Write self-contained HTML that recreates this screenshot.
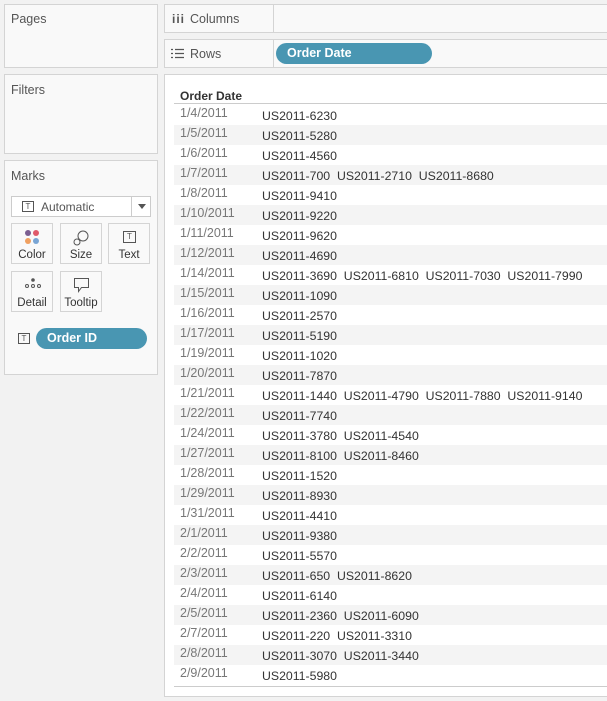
<!DOCTYPE html><html><head><style>
*{margin:0;padding:0;box-sizing:border-box}
body{width:607px;height:701px;background:#f2f2f2;font-family:"Liberation Sans",sans-serif;position:relative;overflow:hidden;font-size:12px;color:#333}
.p{position:absolute;background:#f9f9f9;border:1px solid #d4d4d4}
.t{position:absolute;color:#555;font-size:12.5px}
.btn{position:absolute;width:42px;height:41px;border:1px solid #d4d4d4;background:#f9f9f9;text-align:center;font-size:11.5px;color:#333}
.btn span{position:absolute;left:0;right:0;top:25px}
.pill{position:absolute;background:#4996b2;color:#fff;border-radius:11px;font-weight:bold;font-size:12.5px;padding-left:11px;line-height:21px}
.tb{position:absolute;display:block;width:12px;height:11px;border:1px solid #555;font-size:8px;line-height:9px;text-align:center;color:#555}
.row{position:absolute;left:174px;width:440px;height:20px}
.row:nth-child(even){background:#f4f4f4}
.d{position:absolute;left:6px;top:1px;color:#777;font-size:12.5px}
.i{position:absolute;left:88px;top:4px;color:#333;font-size:12.3px;white-space:pre}
</style></head><body>
<div class="p" style="left:4px;top:4px;width:154px;height:64px"></div><div class="t" style="left:11px;top:12px">Pages</div>
<div class="p" style="left:4px;top:74px;width:154px;height:80px"></div><div class="t" style="left:11px;top:83px">Filters</div>
<div class="p" style="left:4px;top:160px;width:154px;height:215px"></div><div class="t" style="left:11px;top:169px">Marks</div>
<div style="position:absolute;left:11px;top:196px;width:140px;height:21px;border:1px solid #ccc;background:#fff"></div>
<div style="position:absolute;left:131px;top:197px;width:1px;height:19px;background:#ccc"></div>
<div style="position:absolute;left:138px;top:204px;border:4px solid transparent;border-top:5px solid #555"></div>
<div class="tb" style="left:22px;top:201px">T</div>
<div style="position:absolute;left:41px;top:200px;color:#555;font-size:12px">Automatic</div>
<div class="btn" style="left:11px;top:223px"><svg width="20" height="20" style="position:absolute;left:11px;top:4px"><circle cx="5" cy="5" r="3" fill="#7b5e91"/><circle cx="13" cy="5" r="3" fill="#e05a6a"/><circle cx="5" cy="13" r="3" fill="#f0a060"/><circle cx="13" cy="13" r="3" fill="#79a5d4"/></svg><span>Color</span></div>
<div class="btn" style="left:60px;top:223px"><svg width="20" height="20" style="position:absolute;left:11px;top:4px" fill="none" stroke="#555"><circle cx="11" cy="8" r="5"/><circle cx="5" cy="14" r="3"/></svg><span>Size</span></div>
<div class="btn" style="left:108px;top:223px"><div class="tb" style="left:14px;top:7px;width:13px;height:12px;line-height:10px">T</div><span>Text</span></div>
<div class="btn" style="left:11px;top:271px"><svg width="20" height="14" style="position:absolute;left:11px;top:6px" fill="none" stroke="#555"><circle cx="10" cy="2" r="1.3" fill="#555"/><circle cx="4" cy="8" r="1.5"/><circle cx="10" cy="8" r="1.5"/><circle cx="16" cy="8" r="1.5"/></svg><span>Detail</span></div>
<div class="btn" style="left:60px;top:271px"><svg width="20" height="18" style="position:absolute;left:11px;top:4px" fill="none" stroke="#555"><path d="M2.5 2.5h14v9h-7l-3 4v-4h-4z"/></svg><span>Tooltip</span></div>
<div class="tb" style="left:18px;top:333px">T</div>
<div class="pill" style="left:36px;top:328px;width:111px">Order ID</div>
<div class="p" style="left:164px;top:4px;width:450px;height:29px"></div>
<div style="position:absolute;left:273px;top:5px;width:1px;height:27px;background:#d4d4d4"></div>
<div style="position:absolute;left:172px;top:12px;font-weight:bold;color:#555;font-size:12px;letter-spacing:1px">iii</div>
<div class="t" style="left:190px;top:12px">Columns</div>
<div class="p" style="left:164px;top:39px;width:450px;height:29px"></div>
<div style="position:absolute;left:273px;top:40px;width:1px;height:27px;background:#d4d4d4"></div>
<svg width="14" height="12" style="position:absolute;left:171px;top:48px" stroke="#555" stroke-width="1.3"><path d="M0 1.5h2M4 1.5h9M0 5.5h2M4 5.5h9M0 9.5h2M4 9.5h9"/></svg>
<div class="t" style="left:190px;top:47px">Rows</div>
<div class="pill" style="left:276px;top:43px;width:156px">Order Date</div>
<div style="position:absolute;left:164px;top:74px;width:450px;height:623px;background:#fff;border:1px solid #d4d4d4"></div>
<div style="position:absolute;left:180px;top:89px;font-weight:bold;color:#333;font-size:12px">Order Date</div>
<div style="position:absolute;left:174px;top:103px;width:440px;height:1px;background:#ccc"></div>
<div style="position:absolute;left:174px;top:686px;width:440px;height:1px;background:#ccc"></div>
<div style="position:absolute;left:0;top:0">
<div class="row" style="top:105px"><div class="d">1/4/2011</div><div class="i">US2011-6230</div></div>
<div class="row" style="top:125px"><div class="d">1/5/2011</div><div class="i">US2011-5280</div></div>
<div class="row" style="top:145px"><div class="d">1/6/2011</div><div class="i">US2011-4560</div></div>
<div class="row" style="top:165px"><div class="d">1/7/2011</div><div class="i">US2011-700  US2011-2710  US2011-8680</div></div>
<div class="row" style="top:185px"><div class="d">1/8/2011</div><div class="i">US2011-9410</div></div>
<div class="row" style="top:205px"><div class="d">1/10/2011</div><div class="i">US2011-9220</div></div>
<div class="row" style="top:225px"><div class="d">1/11/2011</div><div class="i">US2011-9620</div></div>
<div class="row" style="top:245px"><div class="d">1/12/2011</div><div class="i">US2011-4690</div></div>
<div class="row" style="top:265px"><div class="d">1/14/2011</div><div class="i">US2011-3690  US2011-6810  US2011-7030  US2011-7990</div></div>
<div class="row" style="top:285px"><div class="d">1/15/2011</div><div class="i">US2011-1090</div></div>
<div class="row" style="top:305px"><div class="d">1/16/2011</div><div class="i">US2011-2570</div></div>
<div class="row" style="top:325px"><div class="d">1/17/2011</div><div class="i">US2011-5190</div></div>
<div class="row" style="top:345px"><div class="d">1/19/2011</div><div class="i">US2011-1020</div></div>
<div class="row" style="top:365px"><div class="d">1/20/2011</div><div class="i">US2011-7870</div></div>
<div class="row" style="top:385px"><div class="d">1/21/2011</div><div class="i">US2011-1440  US2011-4790  US2011-7880  US2011-9140</div></div>
<div class="row" style="top:405px"><div class="d">1/22/2011</div><div class="i">US2011-7740</div></div>
<div class="row" style="top:425px"><div class="d">1/24/2011</div><div class="i">US2011-3780  US2011-4540</div></div>
<div class="row" style="top:445px"><div class="d">1/27/2011</div><div class="i">US2011-8100  US2011-8460</div></div>
<div class="row" style="top:465px"><div class="d">1/28/2011</div><div class="i">US2011-1520</div></div>
<div class="row" style="top:485px"><div class="d">1/29/2011</div><div class="i">US2011-8930</div></div>
<div class="row" style="top:505px"><div class="d">1/31/2011</div><div class="i">US2011-4410</div></div>
<div class="row" style="top:525px"><div class="d">2/1/2011</div><div class="i">US2011-9380</div></div>
<div class="row" style="top:545px"><div class="d">2/2/2011</div><div class="i">US2011-5570</div></div>
<div class="row" style="top:565px"><div class="d">2/3/2011</div><div class="i">US2011-650  US2011-8620</div></div>
<div class="row" style="top:585px"><div class="d">2/4/2011</div><div class="i">US2011-6140</div></div>
<div class="row" style="top:605px"><div class="d">2/5/2011</div><div class="i">US2011-2360  US2011-6090</div></div>
<div class="row" style="top:625px"><div class="d">2/7/2011</div><div class="i">US2011-220  US2011-3310</div></div>
<div class="row" style="top:645px"><div class="d">2/8/2011</div><div class="i">US2011-3070  US2011-3440</div></div>
<div class="row" style="top:665px"><div class="d">2/9/2011</div><div class="i">US2011-5980</div></div>
</div>
</body></html>
